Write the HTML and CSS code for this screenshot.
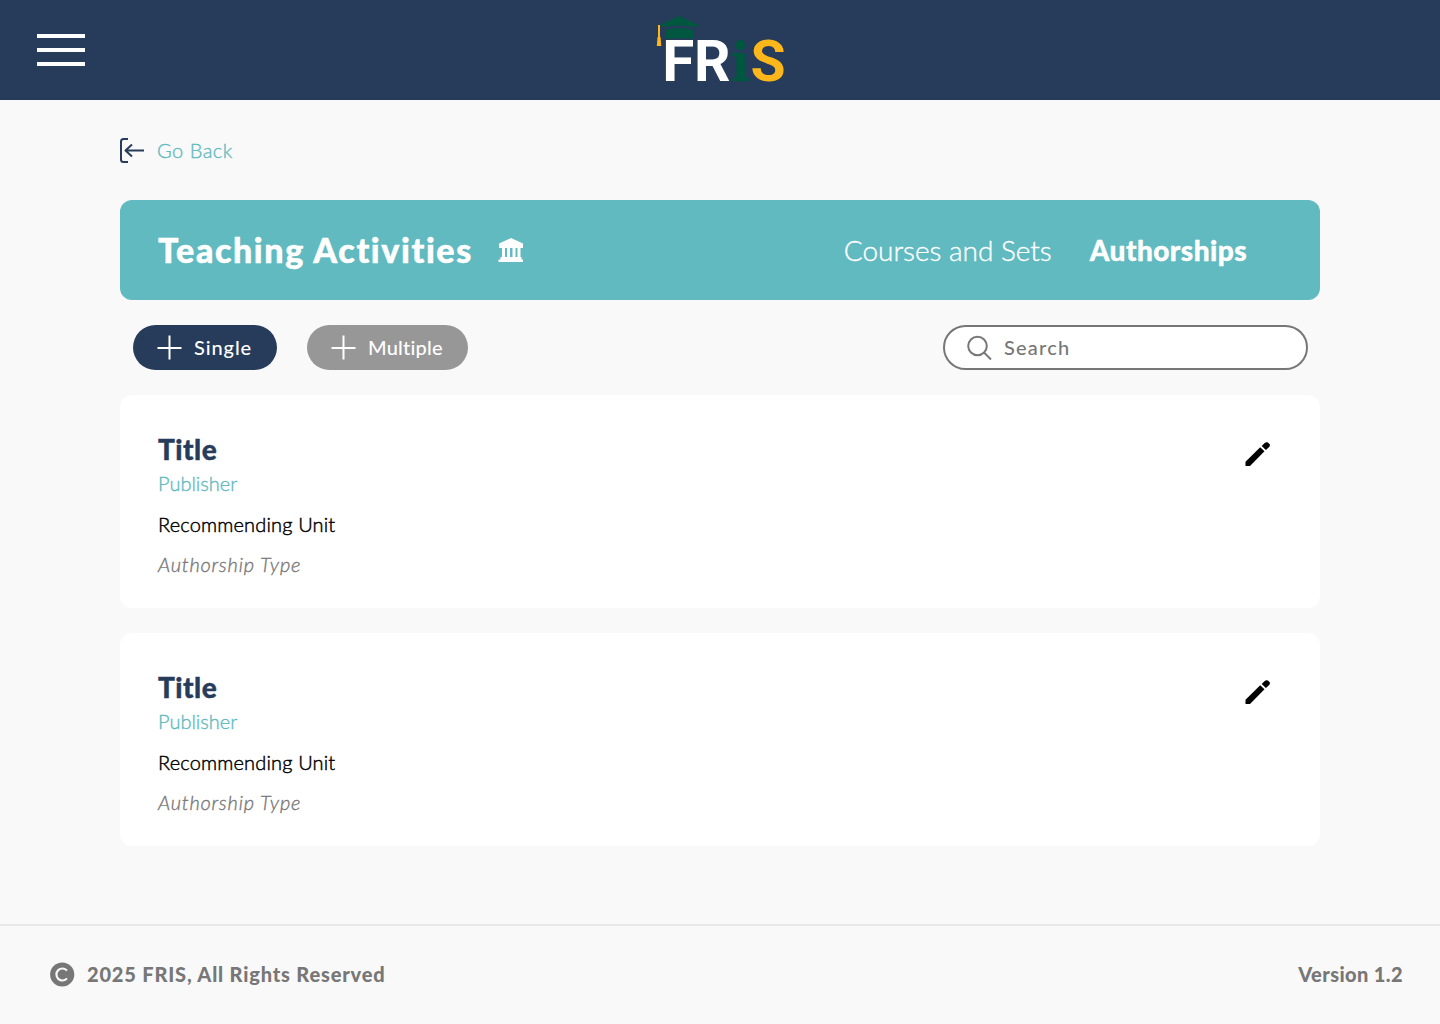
FILE: index.html
```html
<!DOCTYPE html>
<html lang="en">
<head>
<meta charset="utf-8">
<title>FRIS – Teaching Activities</title>
<link rel="stylesheet" href="styles.css">
</head>
<body>
<header class="topbar">
  <button class="menu" aria-label="Menu"><span></span><span></span><span></span></button>
  <svg class="logo" width="132" height="70" viewBox="0 0 132 70" role="img" aria-label="FRIS">
    <path d="M4.500 11.500L25 2l21 9.500-7 1.500q-14-3-28 0z" fill="#00573f"/>
    <path d="M11.500 16q13.500-4 27.500 0v9q-13.500-2-27.500 0z" fill="#00573f"/>
    <path d="M5 11v14" stroke="#fdb71a" stroke-width="2"/>
    <path d="M3.500 23h3l.8 9H2.800z" fill="#fdb71a"/>
    <g class="logo-sans">
      <text x="8.300" y="67" fill="#fff" textLength="32" lengthAdjust="spacingAndGlyphs">F</text>
      <text x="40" y="67" fill="#fff">R</text>
      <text x="96.500" y="67" fill="#fdb71a">S</text>
    </g>
    <text class="logo-slab" x="76.500" y="67">i</text>
  </svg>
</header>

<main class="page">
  <a class="back">
    <svg width="25" height="25" viewBox="0 0 25 25" fill="none" stroke="#273c5b" stroke-width="2" stroke-linejoin="round"><path d="M8 1H3.500Q1 1 1 3.500v18Q1 24 3.500 24H8M24 12.500H6M12 6.500l-6.500 6 6.500 6"/></svg>
    <span class="back-text">Go Back</span>
  </a>

  <section class="banner">
    <h1 class="banner-title">Teaching Activities</h1>
    <svg class="bank" width="26" height="25" viewBox="0 0 26 25" fill="#fff"><path d="M13 0l12 5.500V10H1V5.500zM4 10h3v9H4zM9 10h3v9H9zM14.500 10h3v9h-3zM19.500 10h3v9h-3zM2.500 19h21v2.500H25V24H.500v-2.500h2z"/></svg>
    <nav class="tabs">
      <a class="tab">Courses and Sets</a>
      <a class="tab tab-active">Authorships</a>
    </nav>
  </section>

  <div class="tools">
    <button class="pill pill-single"><svg width="25" height="25" viewBox="0 0 25 25" stroke="#fff" stroke-width="2"><path d="M12.500 .5v24M.5 13h24"/></svg><span class="single-text">Single</span></button>
    <button class="pill pill-multiple"><svg width="25" height="25" viewBox="0 0 25 25" stroke="#fff" stroke-width="2"><path d="M12.500 .5v24M.5 13h24"/></svg><span class="multiple-text">Multiple</span></button>
    <div class="search"><svg width="25" height="25" viewBox="0 0 25 25" fill="none" stroke="#777" stroke-width="2"><circle cx="10.500" cy="11" r="9.300"/><path d="M17 17.500l7 7"/></svg><span class="search-text">Search</span></div>
  </div>

  <article class="card">
    <div>
      <h2 class="title">Title</h2>
      <p class="publisher">Publisher</p>
      <p class="unit">Recommending Unit</p>
      <p class="type">Authorship Type</p>
    </div>
    <svg class="pencil" width="26" height="26" viewBox="0 0 26 26"><path d="M.5 25v-4.200L15.200 6.300l4.300 4L5 25z"/><path d="M16.700 5l3-3q1.600-1.200 3.300-.5l1.600 1.700q.6 1.400-.2 2.500L20.900 9z"/></svg>
  </article>

  <article class="card">
    <div>
      <h2 class="title">Title</h2>
      <p class="publisher">Publisher</p>
      <p class="unit">Recommending Unit</p>
      <p class="type">Authorship Type</p>
    </div>
    <svg class="pencil" width="26" height="26" viewBox="0 0 26 26"><path d="M.5 25v-4.200L15.200 6.300l4.300 4L5 25z"/><path d="M16.700 5l3-3q1.600-1.200 3.300-.5l1.600 1.700q.6 1.400-.2 2.500L20.900 9z"/></svg>
  </article>
</main>

<footer class="footer">
  <svg width="25" height="25" viewBox="0 0 25 25"><circle cx="12.200" cy="12.500" r="12.100" fill="#777"/><path d="M17 8.600a6 6 0 1 0 0 7.800" fill="none" stroke="#f9f9f9" stroke-width="2.200"/></svg>
  <span class="copyright">2025 FRIS, All Rights Reserved</span>
  <span class="version">Version 1.2</span>
</footer>
</body>
</html>
```
FILE: styles.css
```css
* { box-sizing: border-box; }
body {
  margin: 0;
  height: 1024px;
  display: flex;
  flex-direction: column;
  background: #f9f9f9;
  font-family: Lato, sans-serif;
  font-size: 20px;
  font-variant-ligatures: none;
  overflow: hidden;
}
h1, h2, p { margin: 0; }
svg { display: block; flex: none; }
button { border: 0; font: inherit; }
span, a, h1, h2, p { white-space: nowrap; }

.topbar {
  height: 100px;
  flex: none;
  background: #273c5b;
  display: grid;
  grid-template-columns: 1fr auto 1fr;
}
.menu {
  width: 48px;
  margin: 34px 0 0 37px;
  padding: 0;
  background: none;
  display: flex;
  flex-direction: column;
  gap: 10px;
}
.menu span { display: block; height: 4px; background: #fff; }
.logo { margin-top: 14px; overflow: visible; }
.logo-sans { font: 700 57px Roboto, sans-serif; }
.logo-slab { font: 700 54px "DejaVu Serif", serif; fill: #00573f; }

.page { width: 1200px; margin: 0 auto; flex: 1; }
.back {
  height: 100px;
  display: flex;
  align-items: center;
  gap: 12px;
  color: #60babf;
  font-weight: 300;
}
.back-text { letter-spacing: .5px; -webkit-text-stroke: .35px currentColor; }

.banner {
  height: 100px;
  padding: 0 73px 0 38px;
  border-radius: 12px;
  background: #60babf;
  color: #fff;
  display: flex;
  align-items: center;
}
.banner-title {
  padding-bottom: 2px;
  font-size: 34px;
  font-weight: 900;
  letter-spacing: 1.6px;
  -webkit-text-stroke: .5px currentColor;
}
.bank { margin-left: 25.5px; }
.tabs { margin-left: auto; display: flex; gap: 38px; align-items: center; font-size: 28px; }
.tab { font-weight: 300; letter-spacing: -.02px; -webkit-text-stroke: .35px currentColor; }
.tab-active { font-weight: 900; letter-spacing: .45px; -webkit-text-stroke: .4px currentColor; }

.tools { height: 95px; padding: 0 12.5px; display: flex; align-items: center; }
.pill {
  height: 45px;
  padding: 0 0 0 24.5px;
  border-radius: 23px;
  color: #fff;
  display: flex;
  align-items: center;
  gap: 12px;
  font-weight: 500;
}
.pill span, .search span { padding-bottom: 2px; }
.pill-single { width: 144.5px; background: #273c5b; }
.pill-multiple { width: 161.5px; margin-left: 29.5px; background: #979797; }
.single-text { letter-spacing: .9px; }
.multiple-text { letter-spacing: .2px; }
.search-text { letter-spacing: 1.2px; }
.search {
  width: 365px;
  height: 45px;
  margin-left: auto;
  padding-left: 22.5px;
  border: 2px solid #777;
  border-radius: 23px;
  background: #fff;
  color: #777;
  display: flex;
  align-items: center;
  gap: 12px;
  font-weight: 500;
}

.card {
  height: 213px;
  margin-bottom: 25px;
  padding: 36px 49px 0 38px;
  border-radius: 12px;
  background: #fff;
  display: flex;
  justify-content: space-between;
}
.title {
  font-size: 28px;
  line-height: 36px;
  font-weight: 900;
  color: #273c5b;
  letter-spacing: .5px;
  -webkit-text-stroke: .4px currentColor;
}
.publisher, .unit, .type { line-height: 32px; font-weight: 300; -webkit-text-stroke: .35px currentColor; }
.publisher { color: #60babf; }
.unit { margin-top: 9px; color: #000; letter-spacing: .16px; -webkit-text-stroke-width: .45px; }
.type { margin-top: 8px; color: #777; font-style: italic; letter-spacing: .8px; }
.pencil { margin-top: 10px; }

.footer {
  height: 100px;
  padding: 0 37px 2px 50px;
  border-top: 2px solid #e8e8e8;
  display: flex;
  align-items: center;
  gap: 12px;
  color: #777;
  font-weight: 900;
}
.copyright { letter-spacing: .82px; }
.version { margin-left: auto; letter-spacing: .4px; }
```
